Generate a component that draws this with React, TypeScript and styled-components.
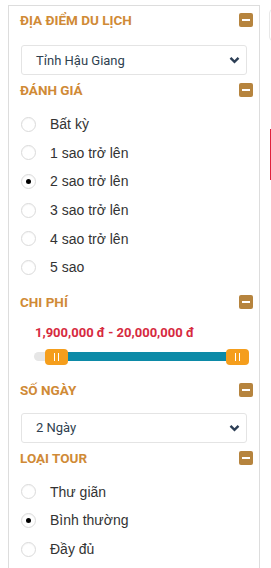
import React from "react";
import styled, { createGlobalStyle } from "styled-components";

const Global = createGlobalStyle`
  html, body { margin: 0; padding: 0; background: #fff; }
  body { font-family: "Liberation Sans", Arial, sans-serif; }
  * { box-sizing: border-box; }
`;

const Page = styled.div`
  display: flex;
  align-items: flex-start;
  gap: 9px;
  padding: 5px 0 0 8px;
  width: 100%;
  overflow: hidden;
`;

const Panel = styled.div`
  width: 252px;
  flex: none;
  border: 1px solid #dddddd;
  padding: 0 6px 30px 11px;
  background: #fff;
`;

const Header = styled.div`
  height: 28px;
  display: flex;
  align-items: center;
  justify-content: space-between;
`;

const Title = styled.span`
  font-family: Roboto, "Liberation Sans", sans-serif;
  font-weight: 700;
  font-size: 13.5px;
  color: #d08a36;
`;

const Toggle = styled.span`
  width: 14px;
  height: 14px;
  border-radius: 2px;
  background: #b6843e;
  display: flex;
  align-items: center;
  justify-content: center;
  &::after {
    content: "";
    width: 8px;
    height: 2px;
    background: #fff;
  }
`;

const Select = styled.div<{ $mt: number }>`
  margin: ${(p) => p.$mt}px 6px 1px 1px;
  height: 30px;
  border: 1px solid #e4e4e4;
  border-radius: 3px;
  display: flex;
  align-items: center;
  justify-content: space-between;
  padding: 0 6px 0 14px;
  font-family: Roboto, "Liberation Sans", sans-serif;
  font-size: 13px;
  color: #2f3f50;
`;

const List = styled.div`
  padding: 6px 0;
`;

const Row = styled.label`
  height: 28.6px;
  display: flex;
  align-items: center;
  gap: 14px;
  padding-left: 1px;
  font-size: 14px;
  color: #333;
`;

const Radio = styled.span<{ $on?: boolean }>`
  width: 15px;
  height: 15px;
  border-radius: 50%;
  border: 1px solid #dadada;
  background: #fff;
  box-shadow: inset 0 1px 1px rgba(0, 0, 0, 0.04);
  display: flex;
  align-items: center;
  justify-content: center;
  flex: none;
  &::after {
    content: "";
    width: 5px;
    height: 5px;
    border-radius: 50%;
    background: ${(p) => (p.$on ? "#000" : "transparent")};
  }
`;

const Price = styled.div`
  margin-top: 9px;
  padding-left: 15px;
  font-family: Roboto, "Liberation Sans", sans-serif;
  font-weight: 700;
  font-size: 13px;
  line-height: 16px;
  color: #d62a40;
`;

const Slider = styled.div`
  position: relative;
  margin: 8px 0 11px 14px;
  width: 215px;
  height: 16px;
  display: flex;
  align-items: center;
`;

const Track = styled.div`
  width: 100%;
  height: 9px;
  border-radius: 5px;
  background: #e6e6e6;
  position: relative;
`;

const Fill = styled.div`
  position: absolute;
  top: 0;
  bottom: 0;
  background: #0c8aa7;
`;

const Handle = styled.span`
  position: absolute;
  top: 0;
  width: 23px;
  height: 16px;
  border-radius: 4px;
  background: #f59e1c;
  display: flex;
  align-items: center;
  justify-content: center;
  gap: 3px;
  &::before,
  &::after {
    content: "";
    width: 1px;
    height: 8px;
    background: #fff;
  }
`;

const Side = styled.div`
  display: flex;
  flex-direction: column;
  padding-top: 4px;
  flex: none;
`;

const SideBox = styled.div`
  width: 40px;
  height: 32px;
  border: 1px solid #e8e8e8;
  border-radius: 4px;
`;

const SideMark = styled.div`
  margin-top: 88px;
  margin-left: 1px;
  width: 2px;
  height: 51px;
  background: #e0203c;
`;

const Chevron = () => (
  <svg width="11" height="8" viewBox="0 0 11 8">
    <polyline points="1.5,1.8 5.5,5.8 9.5,1.8" fill="none" stroke="#2c3e55" strokeWidth="2.4" />
  </svg>
);

const Section = ({ title }: { title: string }) => (
  <Header>
    <Title>{title}</Title>
    <Toggle />
  </Header>
);

const ratings = ["Bất kỳ", "1 sao trở lên", "2 sao trở lên", "3 sao trở lên", "4 sao trở lên", "5 sao"];
const types = ["Thư giãn", "Bình thường", "Đầy đủ"];

export default function App() {
  const min = 45 - 34;
  const max = 226 - 34;
  return (
    <>
      <Global />
      <Page>
        <Panel>
          <Section title="ĐỊA ĐIỂM DU LỊCH" />
          <Select $mt={11}>
            <span>Tỉnh Hậu Giang</span>
            <Chevron />
          </Select>
          <Section title="ĐÁNH GIÁ" />
          <List>
            {ratings.map((r, i) => (
              <Row key={r}>
                <Radio $on={i === 2} />
                {r}
              </Row>
            ))}
          </List>
          <Section title="CHI PHÍ" />
          <Price>1,900,000 đ - 20,000,000 đ</Price>
          <Slider>
            <Track>
              <Fill style={{ left: min + 12, width: max - min }} />
            </Track>
            <Handle style={{ left: min }} />
            <Handle style={{ left: max }} />
          </Slider>
          <Section title="SỐ NGÀY" />
          <Select $mt={9}>
            <span>2 Ngày</span>
            <Chevron />
          </Select>
          <Section title="LOẠI TOUR" />
          <List>
            {types.map((r, i) => (
              <Row key={r}>
                <Radio $on={i === 1} />
                {r}
              </Row>
            ))}
          </List>
        </Panel>
        <Side>
          <SideBox />
          <SideMark />
        </Side>
      </Page>
    </>
  );
}
